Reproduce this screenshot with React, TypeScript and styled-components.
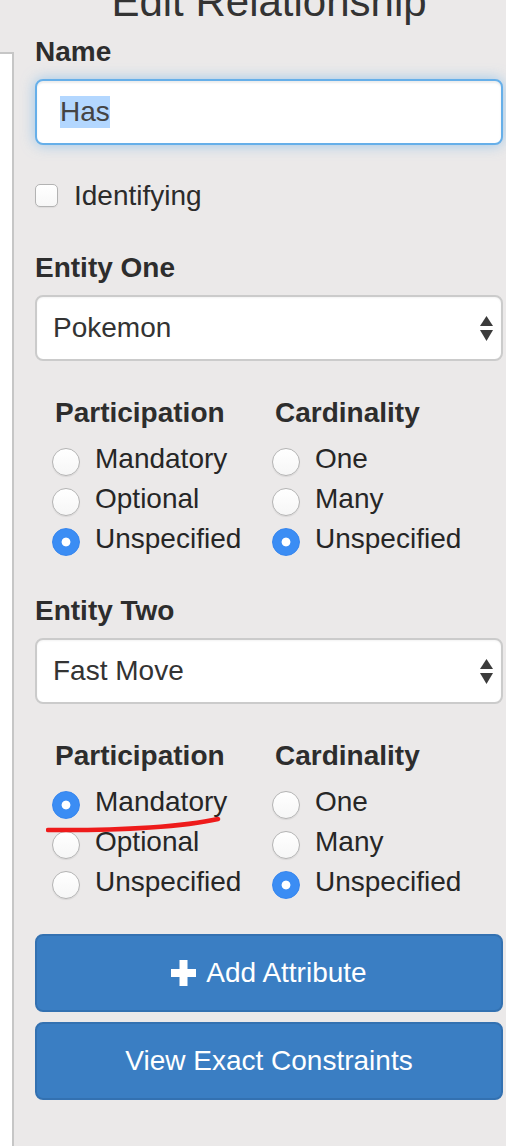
import React from "react";
import styled, { createGlobalStyle } from "styled-components";

const GlobalStyle = createGlobalStyle`
  html, body {
    margin: 0;
    padding: 0;
    background: #ebe9e9;
    overflow: hidden;
  }
  body {
    font-family: "Liberation Sans", Arial, Helvetica, sans-serif;
    color: #2b2b2b;
  }
  * { box-sizing: border-box; }
`;

const Page = styled.div`
  display: flex;
  width: 506px;
  min-height: 1146px;
`;

const Sidebar = styled.aside`
  flex: 0 0 14px;
  margin-top: 52px;
  background: #ffffff;
  border-top: 2px solid #c6c6c6;
  border-right: 2px solid #c6c6c6;
`;

const Panel = styled.section`
  flex: 1;
  display: flex;
  flex-direction: column;
  padding: 0 3px 0 21px;
`;

const Title = styled.h2`
  margin: -21px 0 0;
  font-size: 42px;
  line-height: 46px;
  font-weight: normal;
  text-align: center;
  color: #333;
  white-space: nowrap;
`;

const FieldLabel = styled.label<{ $mt: number }>`
  display: block;
  margin-top: ${(p) => p.$mt}px;
  font-size: 28px;
  line-height: 41px;
  font-weight: bold;
  color: #2d2d2d;
`;

const TextField = styled.div`
  margin-top: 7px;
  height: 66px;
  display: flex;
  align-items: center;
  padding: 0 23px;
  background: #fff;
  border: 2px solid #66afe9;
  border-radius: 8px;
  box-shadow: inset 0 2px 2px rgba(0, 0, 0, 0.075), 0 0 14px rgba(102, 175, 233, 0.6);
  font-size: 28px;
  color: #444;
`;

const Selected = styled.span`
  background: #b3d7ff;
  line-height: 32px;
`;

const CheckRow = styled.label`
  margin-top: 30px;
  height: 40px;
  display: flex;
  align-items: flex-start;
  gap: 16px;
  font-size: 28px;
  line-height: 41px;
  color: #2b2b2b;
`;

const Checkbox = styled.input`
  appearance: none;
  -webkit-appearance: none;
  margin: 9px 0 0;
  width: 23px;
  height: 23px;
  border: 1px solid #b3b3b3;
  border-radius: 5px;
  background: linear-gradient(#ffffff, #f7f7f7);
  box-shadow: 0 1px 1px rgba(0, 0, 0, 0.06);
`;

const SelectBox = styled.div`
  margin-top: 7px;
  height: 66px;
  display: flex;
  align-items: center;
  justify-content: space-between;
  padding: 0 8px 0 16px;
  background: #fff;
  border: 2px solid #cbcbcb;
  border-radius: 8px;
  box-shadow: inset 0 1px 2px rgba(0, 0, 0, 0.05);
  font-size: 28px;
  color: #333;
`;

const Group = styled.div<{ $mt: number }>`
  position: relative;
  margin-top: ${(p) => p.$mt}px;
  display: grid;
  grid-template-columns: 220px 220px;
  padding-left: 20px;
`;

const Column = styled.div`
  display: flex;
  flex-direction: column;
`;

const ColumnHead = styled.div`
  font-size: 28px;
  line-height: 41px;
  font-weight: bold;
  color: #2d2d2d;
  margin-bottom: 5px;
`;

const RadioRow = styled.label`
  height: 40px;
  display: flex;
  align-items: flex-start;
  gap: 15px;
  font-size: 28px;
  line-height: 42px;
  color: #262626;
  white-space: nowrap;
`;

const Radio = styled.input`
  appearance: none;
  -webkit-appearance: none;
  flex: 0 0 28px;
  width: 28px;
  height: 28px;
  margin: 10px 0 0 -3px;
  border-radius: 50%;
  border: 1px solid #b4b4b4;
  background: linear-gradient(#ffffff, #f6f6f6);
  box-shadow: 0 1px 1px rgba(0, 0, 0, 0.08);
  &:checked {
    border-color: #3585ee;
    background: radial-gradient(circle, #ffffff 0 4px, #3b8df4 4.8px);
    box-shadow: none;
  }
`;

const Annotation = styled.svg`
  position: absolute;
  left: 11px;
  top: 81px;
  pointer-events: none;
`;

const Actions = styled.div`
  margin-top: 33px;
  display: flex;
  flex-direction: column;
  gap: 10px;
`;

const PrimaryButton = styled.button`
  height: 78px;
  display: flex;
  align-items: center;
  justify-content: center;
  gap: 10px;
  background: #3a7ec3;
  border: 2px solid #3371b1;
  border-radius: 8px;
  color: #fff;
  font-family: "Liberation Sans", Arial, Helvetica, sans-serif;
  font-size: 28px;
  padding: 0;
`;

const SelectArrows = () => (
  <svg width="13" height="25" viewBox="0 0 13 25" aria-hidden="true">
    <polygon points="0,10 6.5,0 13,10" fill="#3b3b3b" />
    <polygon points="0,14 13,14 6.5,25" fill="#3b3b3b" />
  </svg>
);

const PlusIcon = () => (
  <svg width="25" height="26" viewBox="0 0 25 26" aria-hidden="true">
    <rect x="0" y="9" width="25" height="8" fill="#fff" />
    <rect x="8.5" y="0" width="8" height="26" fill="#fff" />
  </svg>
);

type RadioGroupProps = {
  name: string;
  participation: string;
  cardinality: string;
  annotated?: boolean;
  mt: number;
};

const participationOptions = ["Mandatory", "Optional", "Unspecified"];
const cardinalityOptions = ["One", "Many", "Unspecified"];

const ConstraintGroup = ({ name, participation, cardinality, annotated, mt }: RadioGroupProps) => (
  <Group $mt={mt}>
    <Column>
      <ColumnHead>Participation</ColumnHead>
      {participationOptions.map((o) => (
        <RadioRow key={o}>
          <Radio type="radio" name={`${name}-p`} defaultChecked={o === participation} />
          {o}
        </RadioRow>
      ))}
    </Column>
    <Column>
      <ColumnHead>Cardinality</ColumnHead>
      {cardinalityOptions.map((o) => (
        <RadioRow key={o}>
          <Radio type="radio" name={`${name}-c`} defaultChecked={o === cardinality} />
          {o}
        </RadioRow>
      ))}
    </Column>
    {annotated && (
      <Annotation width="176" height="20" viewBox="0 0 176 20" aria-hidden="true">
        <path
          d="M2 14 Q 60 14.5 104 11.5 T 172 3"
          fill="none"
          stroke="#ee1b1b"
          strokeWidth="4.5"
          strokeLinecap="round"
        />
      </Annotation>
    )}
  </Group>
);

export default function App() {
  return (
    <>
      <GlobalStyle />
      <Page>
        <Sidebar />
        <Panel>
          <Title>Edit Relationship</Title>
          <FieldLabel $mt={6}>Name</FieldLabel>
          <TextField>
            <Selected>Has</Selected>
          </TextField>
          <CheckRow>
            <Checkbox type="checkbox" />
            Identifying
          </CheckRow>

          <FieldLabel $mt={32}>Entity One</FieldLabel>
          <SelectBox>
            <span>Pokemon</span>
            <SelectArrows />
          </SelectBox>
          <ConstraintGroup name="one" participation="Unspecified" cardinality="Unspecified" mt={31} />

          <FieldLabel $mt={32}>Entity Two</FieldLabel>
          <SelectBox>
            <span>Fast Move</span>
            <SelectArrows />
          </SelectBox>
          <ConstraintGroup name="two" participation="Mandatory" cardinality="Unspecified" annotated mt={31} />

          <Actions>
            <PrimaryButton type="button">
              <PlusIcon />
              Add Attribute
            </PrimaryButton>
            <PrimaryButton type="button">View Exact Constraints</PrimaryButton>
          </Actions>
        </Panel>
      </Page>
    </>
  );
}
